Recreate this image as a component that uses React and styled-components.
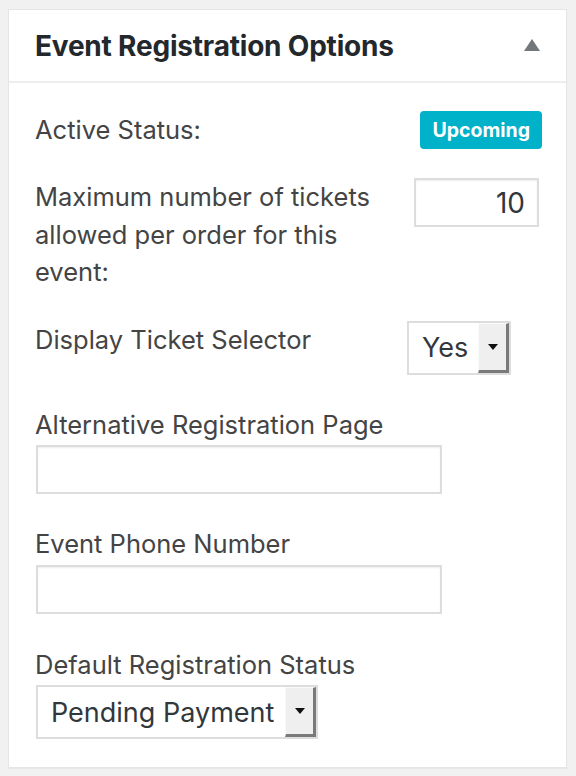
import React from "react";
import styled, { createGlobalStyle } from "styled-components";

const Global = createGlobalStyle`
  html, body { margin: 0; padding: 0; background: #f1f1f1; }
  body { font-family: Inter, "Noto Sans", sans-serif; color: #444; }
  * { box-sizing: border-box; }
`;

const Page = styled.div`
  padding: 9px 9px 9px 8px;
  width: 576px;
`;

const Card = styled.section`
  background: #fff;
  border: 1px solid #e5e5e5;
  box-shadow: 0 1px 1px rgba(0, 0, 0, 0.04);
`;

const Header = styled.header`
  height: 73px;
  display: flex;
  align-items: center;
  justify-content: space-between;
  padding: 0 26px 0 26px;
  border-bottom: 2px solid #eee;
`;

const Title = styled.h2`
  margin: 0;
  font-size: 28px;
  font-weight: 700;
  color: #23282d;
  letter-spacing: -0.2px;
`;

const Toggle = styled.svg`
  width: 16px;
  height: 12px;
  fill: #72777c;
  margin-top: -2px;
`;

const Body = styled.div`
  display: flex;
  flex-direction: column;
  padding: 28px 24px 28px 26px;
`;

const Row = styled.div`
  display: flex;
  justify-content: space-between;
  align-items: ${(p) => p.$align || "flex-start"};
  margin-top: ${(p) => p.$mt || 0}px;
`;

const Field = styled.div`
  display: flex;
  flex-direction: column;
  gap: 2px;
  margin-top: ${(p) => p.$mt || 0}px;
`;

const Label = styled.label`
  font-size: 25.5px;
  line-height: 37.5px;
  color: #444;
  max-width: ${(p) => p.$max || "none"};
`;

const Badge = styled.span`
  display: inline-flex;
  align-items: center;
  height: 38px;
  padding: 0 12px;
  border-radius: 4px;
  background: #00b1ca;
  color: #fff;
  font-size: 19.5px;
  font-weight: 700;
`;

const TextInput = styled.input`
  width: ${(p) => p.$w}px;
  height: ${(p) => p.$h || 50}px;
  margin-right: ${(p) => p.$mr || 0}px;
  margin-left: ${(p) => p.$ml || 0}px;
  border: 2px solid #ddd;
  box-shadow: inset 0 1px 2px rgba(0, 0, 0, 0.07);
  background: #fff;
  font-family: inherit;
  font-size: 28px;
  color: #32373c;
  padding: 0 12px;
  text-align: ${(p) => p.$align || "left"};
  outline: none;
`;

const Select = styled.div`
  display: flex;
  align-items: stretch;
  width: ${(p) => p.$w}px;
  height: 54px;
  margin-right: ${(p) => p.$mr || 0}px;
  margin-left: ${(p) => p.$ml || 0}px;
  border: 2px solid #ddd;
  background: #fff;
`;

const SelectValue = styled.span`
  flex: 1;
  display: flex;
  align-items: center;
  padding-left: 13px;
  font-size: 27px;
  color: #32373c;
  white-space: nowrap;
`;

const SelectButton = styled.span`
  width: 31px;
  display: flex;
  align-items: center;
  justify-content: center;
  background: #efefef;
  border-top: 1px solid #fafafa;
  border-left: 1px solid #fafafa;
  border-right: 3px solid #7a7a7a;
  border-bottom: 3px solid #7a7a7a;
`;

const Arrow = styled.svg`
  width: 10px;
  height: 6px;
  fill: #111;
`;

function Dropdown({ value, w, mr, ml }) {
  return (
    <Select $w={w} $mr={mr} $ml={ml}>
      <SelectValue>{value}</SelectValue>
      <SelectButton>
        <Arrow viewBox="0 0 10 6">
          <polygon points="0,0 10,0 5,6" />
        </Arrow>
      </SelectButton>
    </Select>
  );
}

export default function App() {
  return (
    <Page>
      <Global />
      <Card>
        <Header>
          <Title>Event Registration Options</Title>
          <Toggle viewBox="0 0 16 12">
            <polygon points="8,0 16,12 0,12" />
          </Toggle>
        </Header>
        <Body>
          <Row $align="center">
            <Label>Active Status:</Label>
            <Badge>Upcoming</Badge>
          </Row>
          <Row $mt={29}>
            <Label $max="350px">
              Maximum number of tickets allowed per order for this event:
            </Label>
            <TextInput $w={125} $h={49} $mr={3} $align="right" defaultValue="10" />
          </Row>
          <Row $mt={30}>
            <Label>Display Ticket Selector</Label>
            <Dropdown value="Yes" w={104} mr={31} />
          </Row>
          <Field $mt={31}>
            <Label>Alternative Registration Page</Label>
            <TextInput $w={406} $h={49} $ml={1} />
          </Field>
          <Field $mt={31}>
            <Label>Event Phone Number</Label>
            <TextInput $w={406} $h={49} $ml={1} />
          </Field>
          <Field $mt={32}>
            <Label>Default Registration Status</Label>
            <Dropdown value="Pending Payment" w={282} ml={1} />
          </Field>
        </Body>
      </Card>
    </Page>
  );
}
